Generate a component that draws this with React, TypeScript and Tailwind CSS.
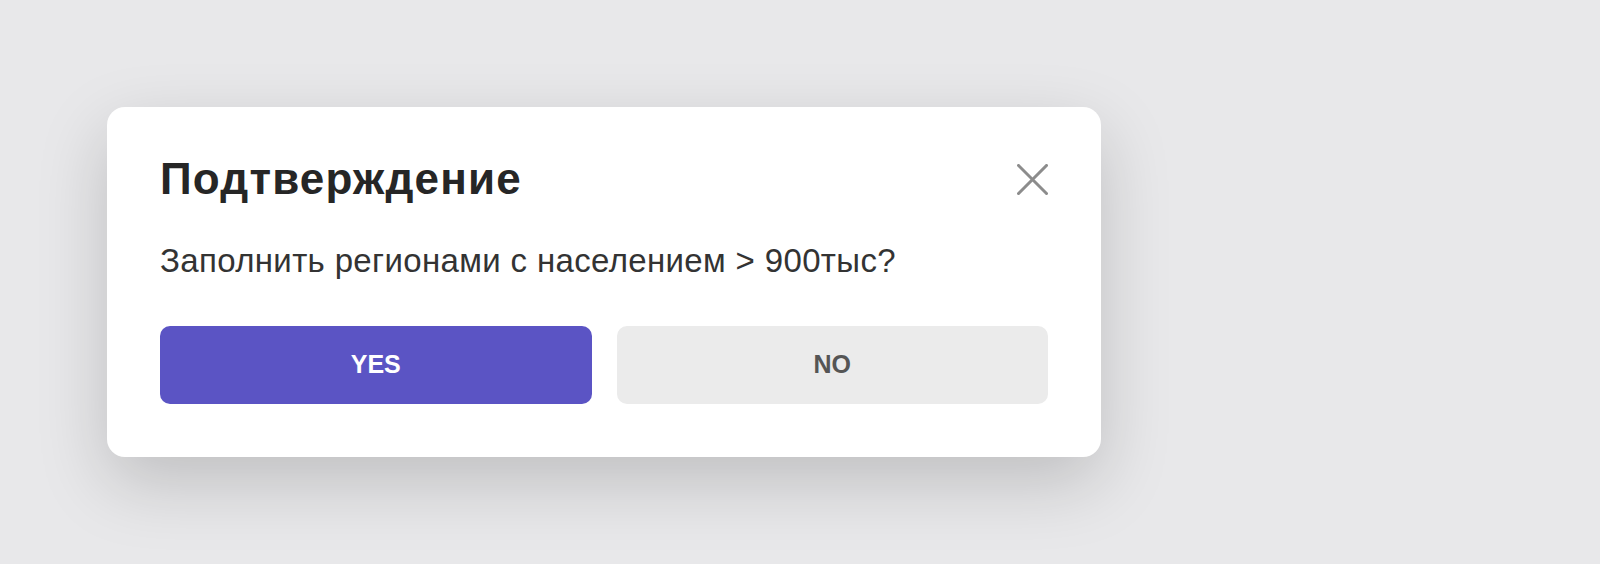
import React from "react";

export default function App() {
  return (
    <div
      className="w-[1600px] h-[564px] bg-[#e8e8ea] overflow-hidden pt-[107px] pl-[107px]"
      style={{ fontFamily: '"Liberation Sans", Arial, sans-serif' }}
    >
      <div className="w-[994px] bg-white rounded-[18px] px-[53px] pt-[47px] pb-[53px] shadow-[0_25px_70px_rgba(0,0,0,0.18)]">
        <div className="flex items-center justify-between h-[50px]">
          <h1 className="text-[44px] leading-[50px] font-bold text-[#262626] tracking-[1.2px]">Подтверждение</h1>
          <button className="w-[31px] h-[31px] flex items-center justify-center">
            <svg width="31" height="31" viewBox="0 0 31 31" fill="none">
              <path d="M1.5 1.5L29.5 29.5M29.5 1.5L1.5 29.5" stroke="#8c8c8c" strokeWidth="3" strokeLinecap="square" />
            </svg>
          </button>
        </div>
        <p className="mt-[37px] text-[33px] leading-[40px] text-[#333333] tracking-[0.35px]">
          Заполнить регионами с населением &gt; 900тыс?
        </p>
        <div className="mt-[45px] flex gap-[25px]">
          <button className="flex-1 h-[78px] rounded-[10px] bg-[#5b54c4] text-white text-[25px] font-bold">
            YES
          </button>
          <button className="flex-1 h-[78px] rounded-[10px] bg-[#ebebeb] text-[#555555] text-[25px] font-bold">
            NO
          </button>
        </div>
      </div>
    </div>
  );
}
